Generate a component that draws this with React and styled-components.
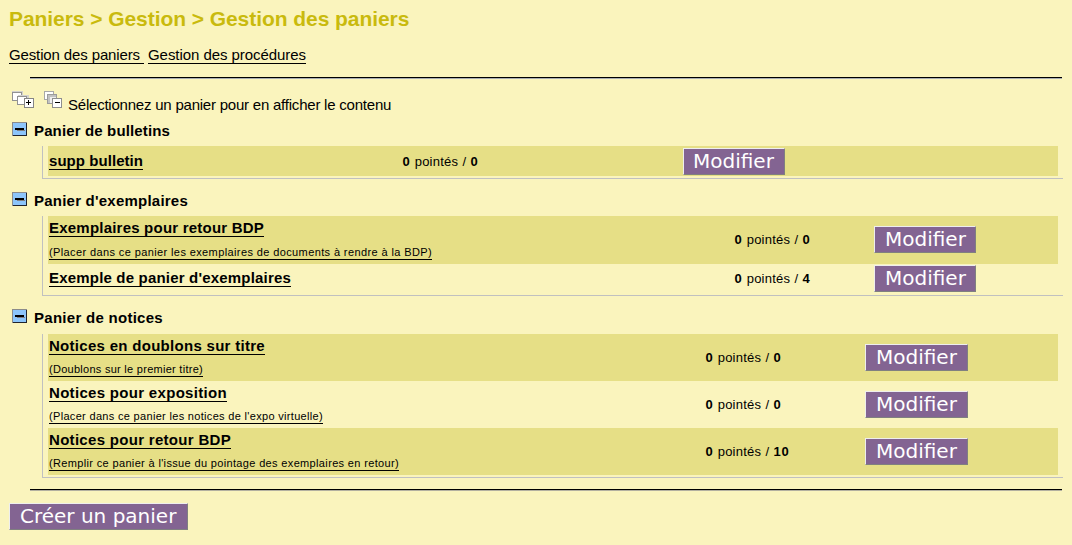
import React from 'react';
import styled, { createGlobalStyle } from 'styled-components';

const GlobalStyle = createGlobalStyle`
  body {
    margin: 0;
    background: #faf4bd;
    color: #000;
    font-family: "Liberation Sans", Arial, sans-serif;
    font-size: 15px;
    line-height: 17px;
  }
`;

const Page = styled.main`
  box-sizing: border-box;
  height: 545px;
  padding: 7px 9px 0;
  display: flex;
  flex-direction: column;
  align-items: stretch;
  overflow: hidden;
  white-space: nowrap;
`;

const Title = styled.h1`
  margin: 0;
  height: 24px;
  font-size: 21px;
  line-height: 24px;
  font-weight: bold;
  letter-spacing: -0.06px;
  color: #c9ba0d;
`;

const Nav = styled.nav`
  display: flex;
  gap: 4px;
  margin-top: 15px;
`;

const NavLink = styled.a`
  box-sizing: border-box;
  width: ${(p) => p.$width}px;
  height: 18px;
  border-bottom: 1px solid #000;
  letter-spacing: ${(p) => p.$track}px;
  white-space: pre;
`;

const Rule = styled.hr`
  flex: none;
  box-sizing: border-box;
  margin: ${(p) => p.$top}px 1px 0 21px;
  height: 2px;
  border: 0;
  border-top: 1px solid #000;
  background: ${(p) => p.$shade};
`;

const Hint = styled.div`
  display: flex;
  align-items: flex-start;
  margin-top: 12px;
  padding-left: 3px;
  height: 31px;
`;

const HintText = styled.span`
  margin: 5px 0 0 6px;
  letter-spacing: -0.22px;
`;

const TreeIcon = styled.svg`
  display: block;
  margin-right: ${(p) => p.$gap || 0}px;
`;

const Group = styled.section`
  height: ${(p) => p.$height}px;
`;

const GroupHead = styled.header`
  display: flex;
  align-items: flex-start;
  gap: 7px;
  padding-left: 3px;
  height: ${(p) => p.$height}px;
`;

const GroupName = styled.span`
  font-weight: bold;
  letter-spacing: ${(p) => p.$track}px;
`;

const GroupBody = styled.div`
  box-sizing: border-box;
  margin: 0 0 0 33px;
  padding: 0 5px 2px;
  border-left: 1px solid #c0c0c0;
  border-bottom: 1px solid #c0c0c0;
`;

const Row = styled.div`
  display: grid;
  grid-template-columns: ${(p) => p.$cols};
  align-items: center;
  height: ${(p) => p.$height}px;
  background: ${(p) => (p.$shaded ? '#e6df86' : 'transparent')};
`;

const Names = styled.div`
  display: flex;
  flex-direction: column;
  align-items: flex-start;
  align-self: start;
  padding: ${(p) => p.$top}px 0 0 1px;
`;

const Name = styled.a`
  box-sizing: border-box;
  width: ${(p) => p.$width}px;
  height: 18px;
  border-bottom: 1px solid #000;
  font-weight: bold;
  letter-spacing: ${(p) => p.$track}px;
`;

const Note = styled.a`
  box-sizing: border-box;
  width: ${(p) => p.$width}px;
  height: 14px;
  margin-top: ${(p) => p.$top}px;
  border-bottom: 1px solid #000;
  font-size: 11px;
  line-height: 13px;
  letter-spacing: ${(p) => p.$track}px;
`;

const Count = styled.span`
  margin-bottom: ${(p) => p.$lift}px;
  padding-left: 0.5px;
  font-size: 13px;
  line-height: 15px;
  letter-spacing: 0.25px;
  word-spacing: 0.35px;

  b {
    letter-spacing: 0.7px;
  }
`;

const Button = styled.button`
  box-sizing: border-box;
  width: ${(p) => p.$width}px;
  height: 27px;
  margin: ${(p) => p.$top || 0}px 0 ${(p) => p.$lift || 0}px;
  padding: 0 0 0 ${(p) => p.$inset || 10}px;
  border: 1px solid;
  border-color: #eeeeee #808080 #808080 #eeeeee;
  border-radius: 0;
  background: #836492;
  color: #fff;
  font: 20px/23px "DejaVu Sans", sans-serif;
  text-align: left;
  white-space: nowrap;
`;

function ExpandAll() {
  return (
    <TreeIcon $gap={10} width="22" height="17" viewBox="0 0 22 17" shapeRendering="crispEdges">
      <path d="M0 0h11v8H0z" fill="#d2d2cf" />
      <rect x="0.5" y="1.5" width="9" height="8" fill="#fff" stroke="#929292" />
      <path d="M6 4h11v8H6z" fill="#d2d2cf" />
      <rect x="5.5" y="5.5" width="9" height="8" fill="#fff" stroke="#929292" />
      <rect x="12.5" y="7.5" width="9" height="9" fill="#fff" stroke="#858585" />
      <path d="M14 11h5v1h-5zM16 9h1v5h-1z" fill="#000" />
    </TreeIcon>
  );
}

function CollapseAll() {
  return (
    <TreeIcon width="18" height="17" viewBox="0 0 18 17" shapeRendering="crispEdges">
      <rect x="0.5" y="0.5" width="9" height="8" fill="#fff" stroke="#a8a8a8" />
      <path d="M3 3h9v9H3z" fill="#c2c2c2" />
      <rect x="3.5" y="3.5" width="9" height="9" fill="none" stroke="#9c9c9c" />
      <path d="M6 6h6v6H6z" fill="#eeeeee" />
      <rect x="8.5" y="7.5" width="9" height="9" fill="#fff" stroke="#8e8e8e" />
      <path d="M11 11h5v1h-5z" fill="#000" />
    </TreeIcon>
  );
}

function Minus() {
  return (
    <TreeIcon width="15" height="14" viewBox="0 0 15 14" shapeRendering="crispEdges">
      <path d="M0 0h15v14H0z" fill="#8cc5fb" />
      <path d="M0 0h15v1H0zM0 0h1v14H0z" fill="#8b8b8b" />
      <path d="M14 1h1v13H1v-1h13z" fill="#20242c" />
      <path d="M5 8h8v1H5z" fill="#7d7f86" />
      <path d="M3 6h9v2H3z" fill="#000" />
    </TreeIcon>
  );
}

const groups = [
  {
    name: 'Panier de bulletins', track: 0.138, height: 70, head: 24, cols: '354px 281px 1fr', button: 102, inset: 9,
    items: [{ name: 'supp bulletin', width: 94, track: 0.052, total: 0, height: 30, top: 6 }],
  },
  {
    name: "Panier d'exemplaires", track: 0.226, height: 117, head: 24, cols: '686px 140px 1fr', button: 102,
    items: [
      {
        name: 'Exemplaires pour retour BDP', width: 215, track: 0.214, total: 0, height: 48, top: 3, lift: 1,
        note: '(Placer dans ce panier les exemplaires de documents à rendre à la BDP)',
        noteWidth: 383, noteTrack: 0.388, noteTop: 9,
      },
      { name: "Exemple de panier d'exemplaires", width: 242, track: 0.188, total: 4, height: 29, top: 5 },
    ],
  },
  {
    name: 'Panier de notices', track: 0.281, height: 172, head: 25, cols: '657px 160px 1fr', button: 103,
    items: [
      {
        name: 'Notices en doublons sur titre', width: 216, track: 0.292, total: 0, height: 47, top: 3,
        note: '(Doublons sur le premier titre)', noteWidth: 154, noteTrack: 0.274, noteTop: 8,
      },
      {
        name: 'Notices pour exposition', width: 178, track: 0.31, total: 0, height: 47, top: 3,
        note: "(Placer dans ce panier les notices de l'expo virtuelle)",
        noteWidth: 274, noteTrack: 0.319, noteTop: 8,
      },
      {
        name: 'Notices pour retour BDP', width: 182, track: 0.303, total: 10, height: 47, top: 3,
        note: "(Remplir ce panier à l'issue du pointage des exemplaires en retour)",
        noteWidth: 350, noteTrack: 0.347, noteTop: 8,
      },
    ],
  },
];

function BasketRow({ item, shaded, cols, button, inset }) {
  return (
    <Row $cols={cols} $height={item.height} $shaded={shaded}>
      <Names $top={item.top}>
        <Name $width={item.width} $track={item.track}>{item.name}</Name>
        {item.note && (
          <Note $width={item.noteWidth} $track={item.noteTrack} $top={item.noteTop}>{item.note}</Note>
        )}
      </Names>
      <Count $lift={item.lift || 0}>
        <b>0</b> pointés / <b>{item.total}</b>
      </Count>
      <Button $width={button} $inset={inset} $lift={item.lift}>Modifier</Button>
    </Row>
  );
}

export default function App() {
  return (
    <>
      <GlobalStyle />
      <Page>
        <Title>Paniers &gt; Gestion &gt; Gestion des paniers</Title>
        <Nav>
          <NavLink $width={135} $track={-0.129}>{'Gestion des paniers '}</NavLink>
          <NavLink $width={158} $track={-0.058}>Gestion des procédures</NavLink>
        </Nav>
        <Rule $top={13} $shade="#a9adb3" />
        <Hint>
          <ExpandAll />
          <CollapseAll />
          <HintText>Sélectionnez un panier pour en afficher le contenu</HintText>
        </Hint>
        {groups.map((g) => (
          <Group key={g.name} $height={g.height}>
            <GroupHead $height={g.head}>
              <Minus />
              <GroupName $track={g.track}>{g.name}</GroupName>
            </GroupHead>
            <GroupBody>
              {g.items.map((item, i) => (
                <BasketRow
                  key={item.name}
                  item={item}
                  shaded={i % 2 === 0}
                  cols={g.cols}
                  button={g.button}
                  inset={g.inset}
                />
              ))}
            </GroupBody>
          </Group>
        ))}
        <Rule $top={8} $shade="#b3b0a0" />
        <div>
          <Button $width={179} $top={12}>Créer un panier</Button>
        </div>
      </Page>
    </>
  );
}
